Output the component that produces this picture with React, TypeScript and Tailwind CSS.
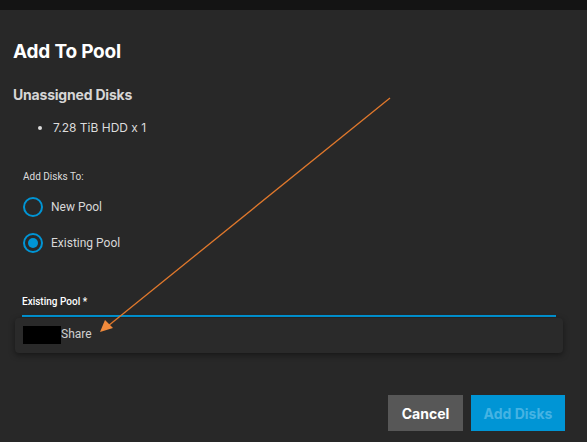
import { useState } from 'react';

type PoolOption = 'new' | 'existing';

const RADIOS: { value: PoolOption; label: string }[] = [
  { value: 'new', label: 'New Pool' },
  { value: 'existing', label: 'Existing Pool' },
];

function Radio({ checked, label }: { checked: boolean; label: string }) {
  return (
    <div className="flex h-[36px] items-center gap-[8px]">
      <span className="flex h-[20px] w-[20px] items-center justify-center rounded-full border-2 border-[#0095d5]">
        {checked && <span className="h-[10px] w-[10px] rounded-full bg-[#0095d5]" />}
      </span>
      <span className="text-[12px] text-[#d8d8d8]" style={{ fontFamily: 'Roboto, sans-serif' }}>
        {label}
      </span>
    </div>
  );
}

export default function App() {
  const [target] = useState<PoolOption>('existing');

  return (
    <div
      className="relative flex h-[442px] w-[587px] flex-col overflow-hidden bg-[#282828] text-white"
      style={{ fontFamily: 'Inter, "Noto Sans", sans-serif' }}
    >
      <div className="h-[10px] shrink-0 bg-[#141414]" />

      <div className="flex flex-1 flex-col px-[13px]">
        <h1 className="mt-[30px] text-[19px] font-bold leading-[24px] tracking-[-0.2px] text-white">Add To Pool</h1>

        <h2 className="mt-[21px] text-[14px] font-bold leading-[20px] tracking-[-0.2px] text-[#d6d6d6]">
          Unassigned Disks
        </h2>
        <ul className="mt-[16px] list-disc pl-[40px] text-[12px] leading-[14px] text-[#dcdcdc]">
          <li>7.28 TiB HDD x 1</li>
        </ul>

        <div className="mt-[35px] px-[10px]">
          <div className="text-[10px] leading-[14px] text-[#dcdcdc]" style={{ fontFamily: 'Roboto, sans-serif' }}>
            Add Disks To:
          </div>
          <div className="mt-[5px] flex flex-col">
            {RADIOS.map((r) => (
              <Radio key={r.value} checked={target === r.value} label={r.label} />
            ))}
          </div>
        </div>

        <div className="mt-[34px] pl-[9px] pr-[18px]">
          <div className="text-[10px] font-medium leading-[14px] text-white" style={{ fontFamily: 'Roboto, sans-serif' }}>
            Existing Pool *
          </div>
          <div className="mt-[6px] h-[2px] bg-[#0095d5]" />
        </div>

        <div className="ml-[2px] mr-[11px] mt-[1px] flex h-[35px] items-center rounded-[4px] bg-[#2a2a2a] pb-[1px] pl-[8px] shadow-[0_2px_6px_rgba(0,0,0,0.45)]">
          <span className="h-[18px] w-[38px] bg-black" />
          <span className="-mt-[3px] text-[12px] text-[#d0d0d0]" style={{ fontFamily: 'Roboto, sans-serif' }}>
            Share
          </span>
        </div>

        <div className="mt-[42px] flex justify-end gap-[8px] pr-[9px]">
          <button className="h-[36px] w-[75px] bg-[#575757] text-[14px] font-bold text-white">Cancel</button>
          <button className="h-[36px] w-[94px] bg-[#0095d5] text-[14px] font-bold text-[#45b3e3]" disabled>
            Add Disks
          </button>
        </div>
      </div>

      <svg className="pointer-events-none absolute left-0 top-0" width="587" height="442" viewBox="0 0 587 442">
        <line x1="390" y1="98" x2="108" y2="326" stroke="#e0782c" strokeWidth="1.3" />
        <polygon points="100,332 105,320 113,328" fill="#f08a3c" />
      </svg>
    </div>
  );
}
